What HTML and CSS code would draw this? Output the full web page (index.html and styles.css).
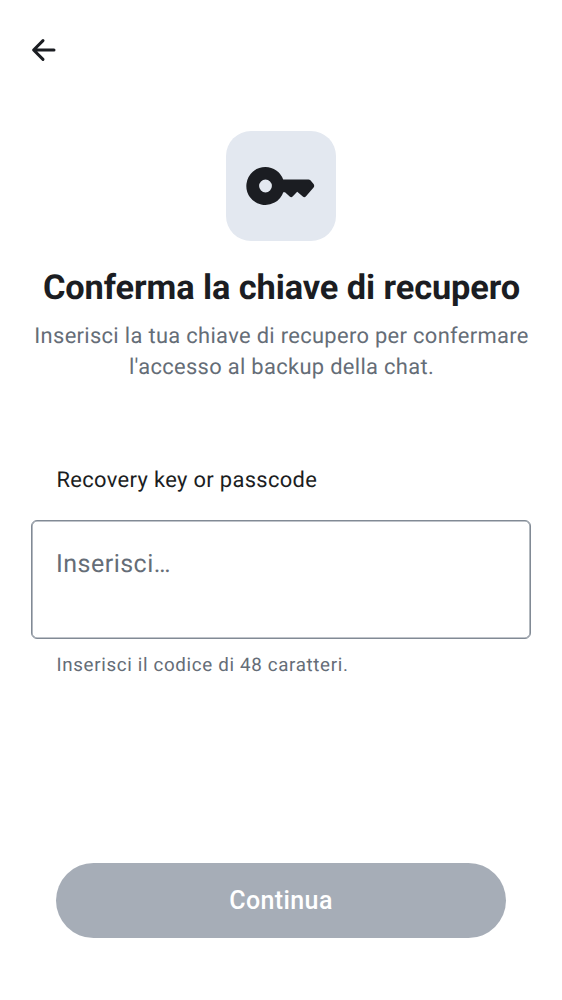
FILE: index.html
```html
<!DOCTYPE html>
<html lang="it">
<head>
<meta charset="utf-8">
<title>Conferma la chiave di recupero</title>
<link rel="stylesheet" href="styles.css">
</head>
<body>
<main class="screen">
  <header class="topbar">
    <svg class="back" viewBox="0 0 25 24" role="img" aria-label="Indietro"><path d="M12 2.600 2.600 12 12 21.400M3 12h20" /></svg>
  </header>
  <section class="intro">
    <div class="tile">
      <svg class="key" viewBox="0 0 68 38" aria-hidden="true"><path fill-rule="evenodd" d="M18.500 0a19 19 0 0 1 17.700 12.500H61.500Q62.600 12.500 63.400 13.300L66.600 16.900Q67.800 18.700 66.600 20.500L58.800 29.500Q57.300 31 55.800 29.600L50.200 24.800 45.600 29.600Q44.200 31 42.700 29.500L38 25.200H36.300A19 19 0 1 1 18.500 0ZM18.500 12.600a6.400 6.400 0 1 0 0 12.800 6.400 6.400 0 0 0 0-12.800Z"/></svg>
    </div>
    <h1 class="title">Conferma la chiave di recupero</h1>
    <p class="subtitle">Inserisci la tua chiave di recupero per confermare<br>l'accesso al backup della chat.</p>
  </section>
  <section class="form">
    <div class="label">Recovery key or passcode</div>
    <div class="field">Inserisci…</div>
    <div class="hint">Inserisci il codice di 48 caratteri.</div>
  </section>
  <button class="continue">Continua</button>
</main>
</body>
</html>
```
FILE: styles.css
```css
* { box-sizing: border-box; }
body { margin: 0; background: #fff; font-family: Roboto, sans-serif; color: #1b1d22; text-rendering: geometricPrecision; }
.screen { height: 1000px; display: flex; flex-direction: column; }
.topbar { height: 100px; padding: 38px 31px; }
.back { display: block; width: 25px; height: 24px; fill: none; stroke: #1b1d22; stroke-width: 3; stroke-linecap: round; stroke-linejoin: round; }
.intro { display: flex; flex-direction: column; align-items: center; padding-top: 31px; text-align: center; }
.tile { width: 110px; height: 110px; border-radius: 25px; background: #e3e8f0; display: flex; align-items: center; justify-content: center; }
.key { width: 68px; height: 38px; fill: #1b1d22; overflow: visible; }
.title { margin: 26px 0 0; font-size: 34.400px; line-height: 42px; font-weight: 700; letter-spacing: -.100px; white-space: nowrap; padding-left: 1px; }
.subtitle { margin: 12px 0 0; font-size: 21.900px; line-height: 31px; letter-spacing: .325px; color: #656d77; white-space: nowrap; padding-left: 1px; }
.form { padding: 82px 31px 0; }
.label { padding-left: 25.500px; font-size: 21.900px; line-height: 32px; letter-spacing: .340px; }
.field { margin-top: 23px; height: 119px; border: 1px solid #818a95; box-shadow: inset 0 0 0 .600px #818a95; border-radius: 6px; padding: 27px 24px; font-size: 25px; line-height: 34px; letter-spacing: .480px; color: #656d77; }
.hint { margin-top: 14px; padding-left: 25.500px; font-size: 18.750px; line-height: 25px; letter-spacing: .660px; color: #656d77; }
.continue { margin: auto 56px 62.500px; height: 75px; border: 0; border-radius: 38px; background: #a6adb7; color: #fff; font: 500 25px/32px Roboto, sans-serif; letter-spacing: .400px; padding: 1px 0 0; }
```
